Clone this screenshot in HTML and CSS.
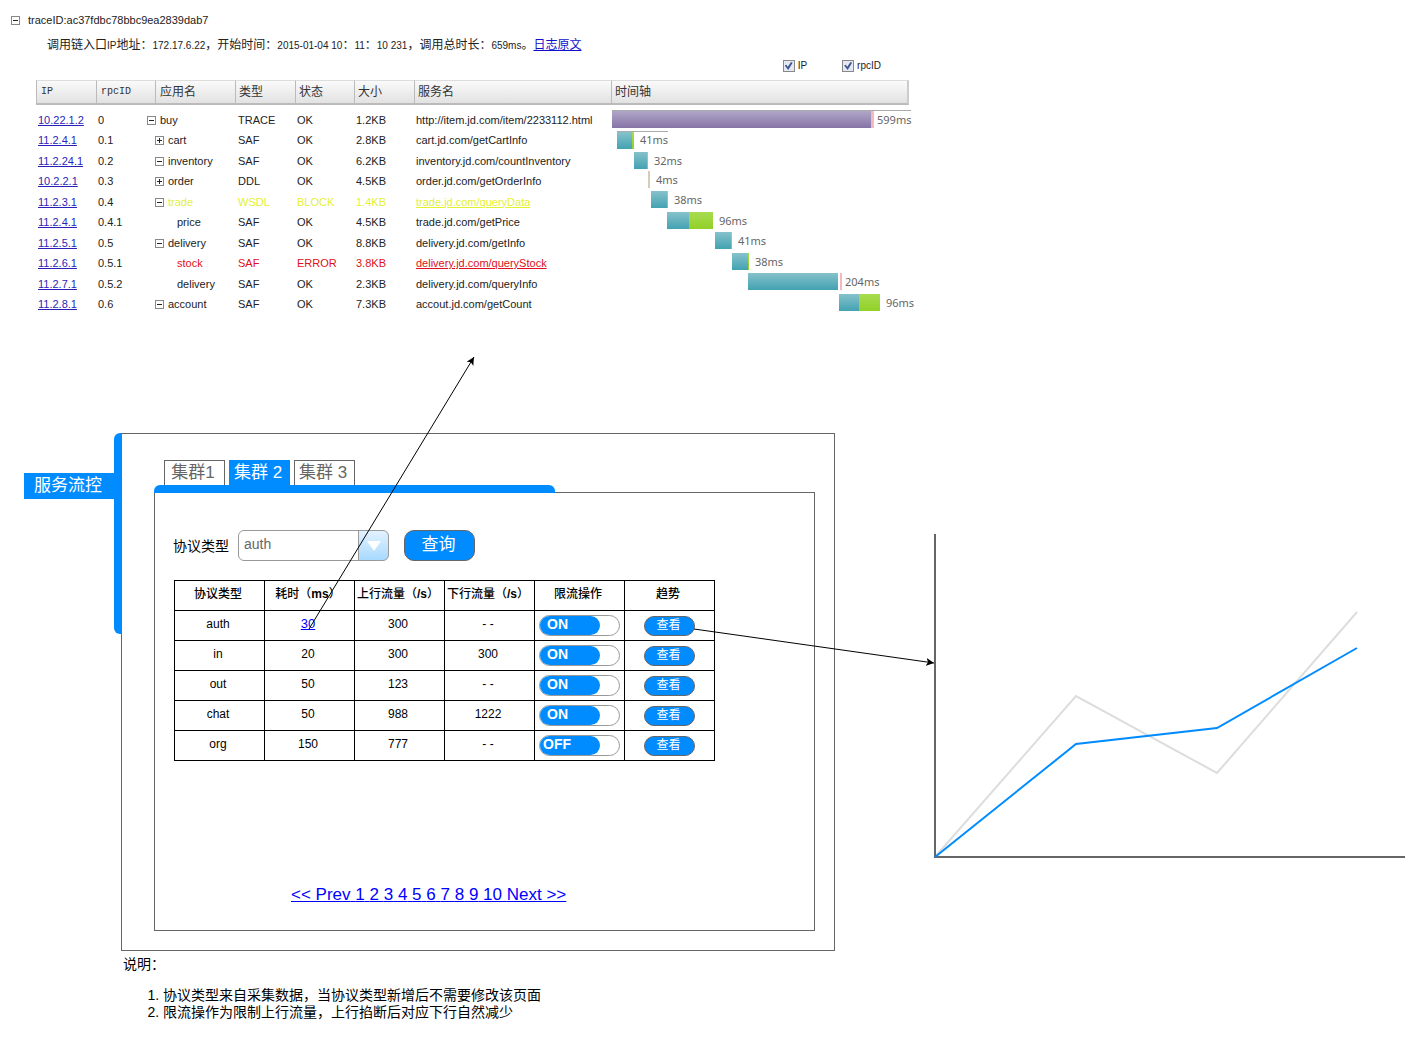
FILE: index.html
```html
<!DOCTYPE html>
<html lang="zh-CN">
<head>
<meta charset="utf-8">
<meta name="viewport" content="width=device-width, initial-scale=1">
<title>服务流控</title>
<link rel="stylesheet" href="styles.css">
</head>
<body>
<svg class="symbols" aria-hidden="true">
  <defs>
    <symbol id="minus" viewBox="0 0 9 9"><rect x="0.5" y="0.5" width="8" height="8" fill="#fff" stroke="#888"/><path d="M2 4.5h5" stroke="#222"/></symbol>
    <symbol id="plus" viewBox="0 0 9 9"><rect x="0.5" y="0.5" width="8" height="8" fill="#fff" stroke="#888"/><path d="M2 4.5h5M4.5 2v5" stroke="#222"/></symbol>
    <marker id="arrow" viewBox="0 0 8 8" refX="8" refY="4" markerWidth="8" markerHeight="8" markerUnits="userSpaceOnUse" orient="auto"><path d="M8 4 0 8 2 4 0 0z"/></marker>
  </defs>
</svg>

<section class="trace">
  <header class="trace-title">
    <button class="twisty" type="button" aria-label="收起"><svg><use href="#minus"/></svg></button>
    <span>traceID:ac37fdbc78bbc9ea2839dab7</span>
  </header>
  <p class="trace-info">调用链入口<span>IP</span>地址：<span>172.17.6.22</span>，开始时间：<span>2015-01-04 10</span>：<span>11</span>：<span>10 231</span>，调用总时长：<span>659ms</span>。<a href="#log">日志原文</a></p>
  <div class="trace-filter">
    <label><input type="checkbox" checked>IP</label>
    <label><input type="checkbox" checked>rpcID</label>
  </div>
  <table class="calls">
    <colgroup><col class="c-ip"><col class="c-rpc"><col class="c-app"><col class="c-type"><col class="c-state"><col class="c-size"><col class="c-service"><col></colgroup>
    <thead>
      <tr><th class="mono">IP</th><th class="mono">rpcID</th><th>应用名</th><th>类型</th><th>状态</th><th>大小</th><th>服务名</th><th>时间轴</th></tr>
    </thead>
    <tbody>
      <tr><td><a href="#ip">10.22.1.2</a></td><td>0</td><td class="root"><button class="twisty" type="button" aria-label="收起"><svg><use href="#minus"/></svg></button>buy</td><td>TRACE</td><td>OK</td><td>1.2KB</td><td>http://item.jd.com/item/2233112.html</td><td><div class="span ruled" style="margin-left:0px"><i class="purple" style="width:259px"></i><i class="pink" style="width:3px"></i><b>599ms</b></div></td></tr>
      <tr><td><a href="#ip">11.2.4.1</a></td><td>0.1</td><td><button class="twisty" type="button" aria-label="展开"><svg><use href="#plus"/></svg></button>cart</td><td>SAF</td><td>OK</td><td>2.8KB</td><td>cart.jd.com/getCartInfo</td><td><div class="span ruled" style="margin-left:5px"><i class="teal" style="width:15px"></i><i class="green" style="width:2px"></i><b>41ms</b></div></td></tr>
      <tr><td><a href="#ip">11.2.24.1</a></td><td>0.2</td><td><button class="twisty" type="button" aria-label="收起"><svg><use href="#minus"/></svg></button>inventory</td><td>SAF</td><td>OK</td><td>6.2KB</td><td>inventory.jd.com/countInventory</td><td><div class="span" style="margin-left:22px"><i class="teal" style="width:13px"></i><i class="green" style="width:1px"></i><b>32ms</b></div></td></tr>
      <tr><td><a href="#ip">10.2.2.1</a></td><td>0.3</td><td><button class="twisty" type="button" aria-label="展开"><svg><use href="#plus"/></svg></button>order</td><td>DDL</td><td>OK</td><td>4.5KB</td><td>order.jd.com/getOrderInfo</td><td><div class="span" style="margin-left:36px"><i class="sand" style="width:2px"></i><b>4ms</b></div></td></tr>
      <tr class="block"><td><a href="#ip">11.2.3.1</a></td><td class="plain">0.4</td><td><button class="twisty" type="button" aria-label="收起"><svg><use href="#minus"/></svg></button>trade</td><td>WSDL</td><td>BLOCK</td><td>1.4KB</td><td><a class="service" href="#service">trade.jd.com/queryData</a></td><td><div class="span" style="margin-left:39px"><i class="teal" style="width:16px"></i><i class="green" style="width:1px"></i><b>38ms</b></div></td></tr>
      <tr><td><a href="#ip">11.2.4.1</a></td><td>0.4.1</td><td class="leaf">price</td><td>SAF</td><td>OK</td><td>4.5KB</td><td>trade.jd.com/getPrice</td><td><div class="span" style="margin-left:55px"><i class="teal" style="width:22px"></i><i class="green" style="width:24px"></i><b>96ms</b></div></td></tr>
      <tr><td><a href="#ip">11.2.5.1</a></td><td>0.5</td><td><button class="twisty" type="button" aria-label="收起"><svg><use href="#minus"/></svg></button>delivery</td><td>SAF</td><td>OK</td><td>8.8KB</td><td>delivery.jd.com/getInfo</td><td><div class="span" style="margin-left:103px"><i class="teal" style="width:16px"></i><i class="green" style="width:1px"></i><b>41ms</b></div></td></tr>
      <tr class="error"><td><a href="#ip">11.2.6.1</a></td><td class="plain">0.5.1</td><td class="leaf">stock</td><td>SAF</td><td>ERROR</td><td>3.8KB</td><td><a class="service" href="#service">delivery.jd.com/queryStock</a></td><td><div class="span" style="margin-left:120px"><i class="teal" style="width:16px"></i><i class="green" style="width:1px"></i><b>38ms</b></div></td></tr>
      <tr><td><a href="#ip">11.2.7.1</a></td><td>0.5.2</td><td class="leaf">delivery</td><td>SAF</td><td>OK</td><td>2.3KB</td><td>delivery.jd.com/queryInfo</td><td><div class="span" style="margin-left:136px"><i class="teal" style="width:90px"></i><i class="pink" style="width:2px"></i><b>204ms</b></div></td></tr>
      <tr><td><a href="#ip">11.2.8.1</a></td><td>0.6</td><td><button class="twisty" type="button" aria-label="收起"><svg><use href="#minus"/></svg></button>account</td><td>SAF</td><td>OK</td><td>7.3KB</td><td>accout.jd.com/getCount</td><td><div class="span" style="margin-left:227px"><i class="teal" style="width:20px"></i><i class="green" style="width:21px"></i><b>96ms</b></div></td></tr>
    </tbody>
  </table>
</section>

<main class="board">
  <aside class="side"><a href="#flow">服务流控</a><span class="rail"></span></aside>

  <section class="panel">
    <nav class="tabs">
      <button type="button">集群1</button>
      <button type="button" class="active">集群 2</button>
      <button type="button">集群 3</button>
    </nav>
    <div class="tab-rail"></div>
    <div class="pane">
      <form class="query">
        <label for="protocol">协议类型</label>
        <div class="dropdown">
          <select id="protocol"><option>auth</option><option>in</option><option>out</option><option>chat</option><option>org</option></select>
          <svg viewBox="0 0 14 10" aria-hidden="true"><path d="M0 0h14L7 10z" fill="#fff"/></svg>
        </div>
        <button type="button">查询</button>
      </form>
      <table class="flow">
        <thead>
          <tr><th>协议类型</th><th>耗时（<b>ms</b>）</th><th>上行流量（<b>/s</b>）</th><th>下行流量（<b>/s</b>）</th><th>限流操作</th><th>趋势</th></tr>
        </thead>
        <tbody>
          <tr><td>auth</td><td><a href="#trace">30</a></td><td>300</td><td>- -</td><td><label class="switch"><input type="checkbox" checked><span>ON</span></label></td><td><button type="button">查看</button></td></tr>
          <tr><td>in</td><td>20</td><td>300</td><td>300</td><td><label class="switch"><input type="checkbox" checked><span>ON</span></label></td><td><button type="button">查看</button></td></tr>
          <tr><td>out</td><td>50</td><td>123</td><td>- -</td><td><label class="switch"><input type="checkbox" checked><span>ON</span></label></td><td><button type="button">查看</button></td></tr>
          <tr><td>chat</td><td>50</td><td>988</td><td>1222</td><td><label class="switch"><input type="checkbox" checked><span>ON</span></label></td><td><button type="button">查看</button></td></tr>
          <tr><td>org</td><td>150</td><td>777</td><td>- -</td><td><label class="switch off"><input type="checkbox"><span>OFF</span></label></td><td><button type="button">查看</button></td></tr>
        </tbody>
      </table>
      <nav class="pager"><a href="#prev">&lt;&lt; Prev</a> <a href="#p1">1</a> <a href="#p2">2</a> <a href="#p3">3</a> <a href="#p4">4</a> <a href="#p5">5</a> <a href="#p6">6</a> <a href="#p7">7</a> <a href="#p8">8</a> <a href="#p9">9</a> <a href="#p10">10</a> <a href="#next">Next &gt;&gt;</a></nav>
    </div>
  </section>

  <svg class="chart" viewBox="0 0 472 326" role="img" aria-label="趋势图">
    <g fill="none" stroke-width="2">
      <path d="M1 323 142 162 283 239 423 78" stroke="#ddd"/>
      <path d="M1 0V323H471" stroke="#666"/>
      <path d="M1 323 142 210 283 194 423 114" stroke="#008cff"/>
    </g>
  </svg>

  <!-- connectors: response time to trace, trend button to chart -->
  <svg class="link-trace" aria-hidden="true"><path d="M0 272 165 0" stroke="#000" marker-end="url(#arrow)"/></svg>
  <svg class="link-trend" aria-hidden="true"><line x1="0" y1="0" x2="100%" y2="34" stroke="#000" marker-end="url(#arrow)"/></svg>
</main>

<section class="notes">
  <p>说明：</p>
  <ol>
    <li>协议类型来自采集数据，当协议类型新增后不需要修改该页面</li>
    <li>限流操作为限制上行流量，上行掐断后对应下行自然减少</li>
  </ol>
</section>
</body>
</html>
```

FILE: styles.css
```css
* { box-sizing: border-box; }

body {
  margin: 0;
  background: #fff;
  color: #000;
  font-family: "Liberation Sans", "Noto Sans CJK SC", sans-serif;
}

button, select, input { font: inherit; margin: 0; }
p, ol { margin: 0; }
a { color: #0000ee; }
.symbols { display: block; width: 0; height: 0; }

/* ---- call trace ---- */
.trace {
  padding: 12px 12px 119px 11px;
  font-size: 11px;
  color: #222;
}
.trace a { color: #2a1fb8; }

.twisty { display: inline-block; width: 9px; height: 9px; padding: 0; border: 0; background: none; line-height: 0; }
.twisty svg { display: block; width: 9px; height: 9px; }

.trace-title { display: flex; align-items: center; gap: 8px; height: 16px; }
.trace-info { margin: 8px 0 0 36px; height: 18px; line-height: 18px; font-size: 12px; white-space: nowrap; }
.trace-info span { font-size: 10px; }
.trace .trace-info a { color: #1111cc; }

.trace-filter { display: flex; justify-content: flex-end; gap: 35px; max-width: 870px; height: 14px; margin-top: 5px; font-size: 10px; line-height: 14px; }
.trace-filter label { display: flex; align-items: center; gap: 3px; }
.trace-filter input {
  appearance: none;
  display: grid;
  place-items: center;
  width: 12px;
  height: 12px;
  border: 1px solid #888;
  background: #e4e8f2;
}
.trace-filter input:checked::after {
  content: "";
  width: 8px;
  height: 8px;
  background: #3f5590;
  clip-path: polygon(0 45%, 20% 35%, 40% 60%, 80% 0, 100% 10%, 45% 100%);
}

.calls { width: 100%; max-width: 873px; margin: 7px 0 0 25px; border-collapse: separate; border-spacing: 0; table-layout: fixed; }
.c-ip, .c-type, .c-size { width: 60px; }
.c-rpc, .c-state { width: 59px; }
.c-app { width: 80px; }
.c-service { width: 197px; }
.calls th {
  height: 25px;
  padding: 0 0 1px 4px;
  border-top: 1px solid #ddd;
  border-bottom: 2px solid #bbb;
  border-left: 1px solid #bbb;
  background: linear-gradient(#fafafa, #e2e2e2);
  color: #333;
  font-size: 12px;
  font-weight: 400;
  line-height: 20px;
  text-align: left;
}
.calls th:nth-child(n+4) { padding-left: 3px; }
.calls th:last-child { border-right: 2px solid #ccc; }
.calls .mono { font-family: "Liberation Mono", monospace; font-size: 10px; }
.calls td { height: 20px; padding: 0 0 0 2px; line-height: 16px; white-space: nowrap; }
.calls tbody tr:nth-child(odd) td { height: 21px; }
.calls tbody tr:first-child td { height: 25px; padding-top: 4px; }
.calls td:nth-child(3) { padding-left: 0; }
.calls td:nth-child(4) { padding-left: 3px; }
.calls td:last-child { padding-left: 1px; }
.calls tr:nth-child(n+4) td:last-child { vertical-align: top; }
.calls .twisty { margin-right: 4px; vertical-align: -1px; }
.calls .root .twisty { margin-left: -8px; }
.calls td.leaf { padding-left: 22px; }
.block { color: #e4f032; }
.error { color: #e01020; }
.calls .plain { color: #222; }
.calls .service { color: inherit; }

.span { display: flex; align-items: center; width: max-content; height: 17px; }
.span i { flex: none; height: 17px; }
.span b { margin-left: 6px; color: #666; font-family: "Noto Sans", sans-serif; font-weight: 400; }
.span .pink + b { margin-left: 3px; }
.span .teal + .pink { margin-left: 2px; }
.ruled { box-shadow: 0 -1px #aaa; }
.purple { background: linear-gradient(#b0a6c8, #8674a6); }
.teal { background: linear-gradient(#86c2cb, #42a2b2); }
.green { background: linear-gradient(#a8dc50, #92d028); }
.pink { background: #f4b8c0; }
.sand { background: #d8ccb8; }

/* ---- flow control board ---- */
.board {
  display: grid;
  grid-template-columns: 97px minmax(0, 714fr) 99px minmax(0, 472fr);
  padding-left: 24px;
}
.board > * { grid-row: 1; }

.side { grid-column: 1; display: flex; margin-right: -1px; z-index: 1; }
.side a { width: 90px; height: 26px; margin-top: 40px; padding-left: 10px; background: #008cff; color: #fff; font-size: 17px; line-height: 26px; text-decoration: none; }
.rail { width: 8px; height: 201px; border-radius: 6px 0 0 6px; background: #008cff; }

.panel { grid-column: 2; padding: 26px 19px 19px 32px; border: 1px solid #666; }
.tabs { display: flex; gap: 4px; padding-left: 10px; }
.tabs button { width: 61px; height: 25px; padding: 0 3px 0 0; border: 1px solid #666; border-bottom: 0; background: #fff; color: #666; font-size: 17px; line-height: 22px; white-space: nowrap; }
.tabs .active { border-color: #008cff; background: #008cff; color: #fff; }
.tab-rail { position: relative; width: 401px; max-width: 100%; height: 8px; margin-bottom: -1px; border-radius: 6px 6px 0 0; background: #008cff; }
.pane { min-height: 439px; padding: 37px 18px 0; border: 1px solid #666; }

.query { display: flex; align-items: center; font-size: 14px; }
.query label { margin-right: 9px; padding-bottom: 2px; }
.dropdown { display: grid; width: 151px; height: 31px; margin-right: 15px; }
.dropdown > * { grid-area: 1 / 1; }
.dropdown select {
  appearance: none;
  padding: 0 36px 3px 5px;
  border: 1px solid #999;
  border-radius: 6px;
  background: linear-gradient(90deg, #999 1px, transparent 1px) right / 30px 100% no-repeat, linear-gradient(#e2f2ff, #a8daff) right / 30px 100% no-repeat, #fff;
  color: #666;
}
.dropdown svg { width: 14px; height: 10px; place-self: center end; margin-right: 8px; pointer-events: none; }
.query button { width: 71px; height: 31px; padding: 0 2px 1px 0; border: 1px solid #666; border-radius: 10px; background: #008cff; color: #fff; font-size: 17px; line-height: 24px; }

.flow { margin: 19px 0 0 1px; border-collapse: collapse; table-layout: fixed; width: 541px; font-size: 12px; text-align: center; }
.flow th, .flow td { height: 30px; padding: 0 3px 3px 0; border: 1px solid #000; line-height: 18px; white-space: nowrap; }
.flow th { font-weight: 500; }
.flow a { color: #0000ff; font-size: 13px; }
.flow td:nth-child(n+5) { padding: 0; }
.flow td button { display: block; width: 51px; height: 20px; margin: 1px auto 0; padding: 0 2px 2px 0; border: 1px solid #666; border-radius: 10px; background: #008cff; color: #fff; line-height: 16px; }

.switch { display: flex; width: 81px; height: 21px; margin: 0 auto; border: 1px solid #999; border-radius: 11px; background: #fff; }
.switch input { appearance: none; width: 0; height: 0; }
.switch span { width: 60px; height: 19px; padding-left: 7px; border-radius: 10px; background: #008cff; color: #fff; font-size: 14px; font-weight: 700; line-height: 17px; text-align: left; }
.switch.off span { padding-left: 3px; }

.pager { margin: 124px 0 0 118px; color: #0000ff; font-size: 17px; line-height: 20px; text-decoration: underline; white-space: nowrap; }
.pager a { color: inherit; text-decoration: none; }

.chart { grid-column: 4; display: block; width: 100%; margin-top: 101px; }
.link-trace { grid-column: 2; z-index: 2; width: 165px; height: 272px; margin: -76px 0 0 188px; overflow: visible; pointer-events: none; }
.link-trend { grid-column: 2 / 4; z-index: 2; width: calc(100% - 573px); height: 34px; margin: 196px 0 0 573px; overflow: visible; pointer-events: none; }

.notes { padding: 5px 0 26px 123px; font-size: 14px; line-height: 17px; }
.notes ol { margin-top: 14px; padding-left: 40px; }
```
